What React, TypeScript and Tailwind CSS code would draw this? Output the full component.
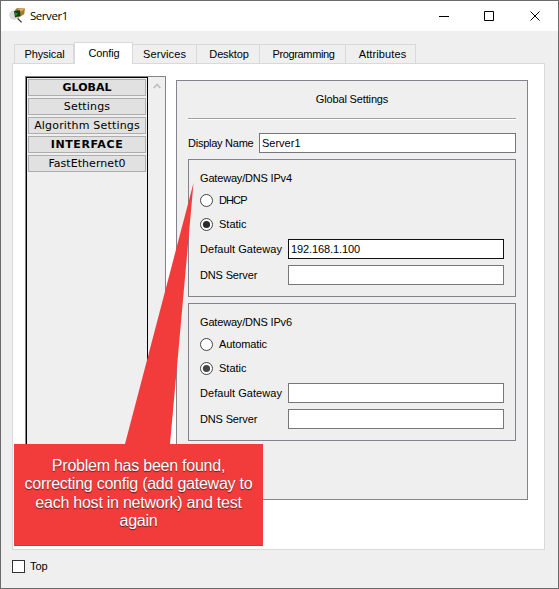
import React from "react";

const tabs = [
  { name: "Physical", w: "w-[60px]", ls: "tracking-[-0.1px] pl-[1px]" },
  { name: "Config", w: "w-[59px]", ls: "tracking-[-0.1px] pl-[1px]" },
  { name: "Services", w: "w-[64px]", ls: "tracking-[0.1px]" },
  { name: "Desktop", w: "w-[63px]", ls: "tracking-[-0.15px] pl-[2px]" },
  { name: "Programming", w: "w-[86px]", ls: "tracking-[-0.35px] pl-[2px]" },
  { name: "Attributes", w: "w-[70px]", ls: "tracking-[0.1px] pl-[4px]" },
];

const sections = [
  { name: "GLOBAL", style: "font-bold" },
  { name: "Settings", style: "tracking-[0.15px]" },
  { name: "Algorithm Settings", style: "tracking-[0.18px]" },
  { name: "INTERFACE", style: "font-bold tracking-[0.6px]" },
  { name: "FastEthernet0", style: "tracking-[0.05px]" },
];

function Radio({ label, checked, dark, ls }: { label: string; checked?: boolean; dark?: boolean; ls?: string }) {
  return (
    <label className="flex h-[24px] items-center gap-[6px]">
      <svg width="13" height="13" viewBox="0 0 13 13">
        <circle cx="6.5" cy="6.5" r="6" fill="#fff" stroke="#444" />
        {checked && <circle cx="6.5" cy="6.5" r="3.6" fill={dark ? "#2b2b2b" : "#444"} />}
      </svg>
      <span className={ls}>{label}</span>
    </label>
  );
}

function Field({ label, value, active, ls }: { label: string; value?: string; active?: boolean; ls?: string }) {
  return (
    <div className="flex h-[20px] items-center">
      <span className={"w-[88px] shrink-0 " + (ls ?? "")}>{label}</span>
      <div
        className={
          "flex h-[20px] w-[216px] items-center border bg-white pl-[2px] tracking-[-0.1px] " +
          (active ? "border-[#111]" : "border-[#777]")
        }
      >
        {value}
      </div>
    </div>
  );
}

function Group({ title, first, firstLs, value }: { title: string; first: string; firstLs: string; value?: string }) {
  return (
    <section className="h-[138px] w-[328px] border border-[#83838f] pl-[11px]">
      <div className="mt-[10px] h-[16px] leading-[16px] tracking-[-0.18px]">{title}</div>
      <div className="mt-[2px]">
        <Radio label={first} ls={firstLs} />
        <Radio label="Static" checked dark={!!value} />
      </div>
      <div className="mt-[3px] flex flex-col gap-[6px]">
        <Field label="Default Gateway" value={value} active={!!value} ls="tracking-[0.04px]" />
        <Field label="DNS Server" ls="tracking-[-0.15px]" />
      </div>
    </section>
  );
}

function AppIcon() {
  return (
    <svg width="17" height="16" viewBox="0 0 17 16">
      <ellipse cx="5" cy="7" rx="4.8" ry="5" fill="#dcdcdc" />
      <path d="M6 2 8 0l8 .6-.8 5.6L9 10z" fill="#a9792f" />
      <path d="m8 .6 7.4.5-3.6 2.6z" fill="#dcb064" />
      <path d="m5 3 6-.8.4 5.6L6 9.4z" fill="#123f12" />
      <path d="m6 4.2 3 1.6-2.6 2.4z" fill="#1d9b2c" />
      <path d="m8.6 10.4 4 4" stroke="#333" strokeWidth="1.3" />
    </svg>
  );
}

export default function App() {
  return (
    <main className="relative flex h-[589px] w-[559px] flex-col overflow-hidden border border-[#6b6b6b] bg-[#efefef] font-['Liberation_Sans',Arial,sans-serif] text-[11px] text-black">
      <div className="absolute -left-px top-[121px] h-[58px] w-px bg-[#4d6473]" />
      <div className="absolute -left-px top-[181px] h-[4px] w-px bg-[#3a2018]" />

      <header className="flex h-[30px] shrink-0 items-center bg-white pl-[8px]">
        <AppIcon />
        <span className="ml-[4px] font-['Open_Sans',sans-serif] text-[11.5px] leading-none tracking-[-0.45px]">Server1</span>
        <svg className="ml-auto mr-[17px]" width="102" height="11" viewBox="0 0 102 11" fill="none" stroke="#000">
          <path d="M0 5.5h10M45.5.5h9v9h-9zM91.5.5l9 9m0-9-9 9" />
        </svg>
      </header>

      <nav className="z-10 mt-[11px] flex h-[21px] shrink-0 items-end pl-[13px]">
        {tabs.map((t) => (
          <div
            key={t.name}
            className={
              "flex items-center justify-center border-[#d9d9d9] " + t.w + " " + t.ls + " " +
              (t.name === "Config"
                ? "h-[22px] -mb-px border border-b-0 bg-white pb-px"
                : "h-[19px] border-t border-r" + (t.name === "Physical" ? " border-l" : ""))
            }
          >
            {t.name}
          </div>
        ))}
      </nav>

      <div className="ml-[11px] flex h-[487px] w-[533px] shrink-0 items-start border border-[#d9d9d9] bg-white pl-[12px]">
        <aside className="mt-[12px] flex h-[424px] w-[141px] border border-[#83838f] bg-[#efefef]">
          <div className="flex w-[122px] flex-col gap-[2px] border border-black px-px pt-px">
            {sections.map((s) => (
              <div
                key={s.name}
                className={
                  "flex h-[17px] shrink-0 items-center justify-center whitespace-nowrap border border-[#adadad] bg-[#e1e1e1] font-['DejaVu_Sans',Verdana,sans-serif] leading-none " +
                  s.style
                }
              >
                {s.name}
              </div>
            ))}
          </div>
          <svg className="ml-[5px] mt-[6px]" width="8" height="6" viewBox="0 0 8 6">
            <path d="m.7 5 3.3-3.5L7.3 5" fill="none" stroke="#bfbfbf" strokeWidth="1.8" />
          </svg>
        </aside>

        <section className="ml-[10px] mt-[16px] flex h-[420px] w-[352px] flex-col border border-[#83838f] bg-[#efefef] pl-[11px]">
          <h1 className="mt-[10px] h-[16px] w-[328px] text-center leading-[16px] tracking-[-0.15px]">Global Settings</h1>
          <div className="mt-[11px] h-[2px] w-[328px] border-t border-b border-t-[#a0a0a0] border-b-white" />
          <div className="mt-[13px] flex h-[20px] items-center">
            <span className="w-[71px] tracking-[-0.25px]">Display Name</span>
            <div className="flex h-[20px] w-[257px] items-center border border-[#777] bg-white pl-[2px]">Server1</div>
          </div>
          <div className="mt-[6px] flex flex-col gap-[6px]">
            <Group title="Gateway/DNS IPv4" first="DHCP" firstLs="tracking-[-0.9px]" value="192.168.1.100" />
            <Group title="Gateway/DNS IPv6" first="Automatic" firstLs="tracking-[-0.1px]" />
          </div>
        </section>
      </div>

      <label className="ml-[11px] mt-[10px] flex h-[13px] items-center gap-[5px]">
        <span className="size-[13px] border border-[#333] bg-white" />
        Top
      </label>

      <div className="absolute left-[13px] top-[182px]">
        <svg className="block" width="249" height="261" viewBox="0 0 249 261">
          <path d="M179.5 0 111 261h45z" fill="#f23b3b" />
        </svg>
        <p className="h-[102px] w-[249px] border-b border-[#a34a4a] bg-[#f23b3b] pt-[13px] text-center text-[16px] leading-[18.4px] tracking-[-0.24px] text-white [text-shadow:0_1px_1px_#5c2020]">
          Problem has been found,
          <br />
          correcting config (add gateway to
          <br />
          each host in network) and test
          <br />
          again
        </p>
      </div>
    </main>
  );
}
